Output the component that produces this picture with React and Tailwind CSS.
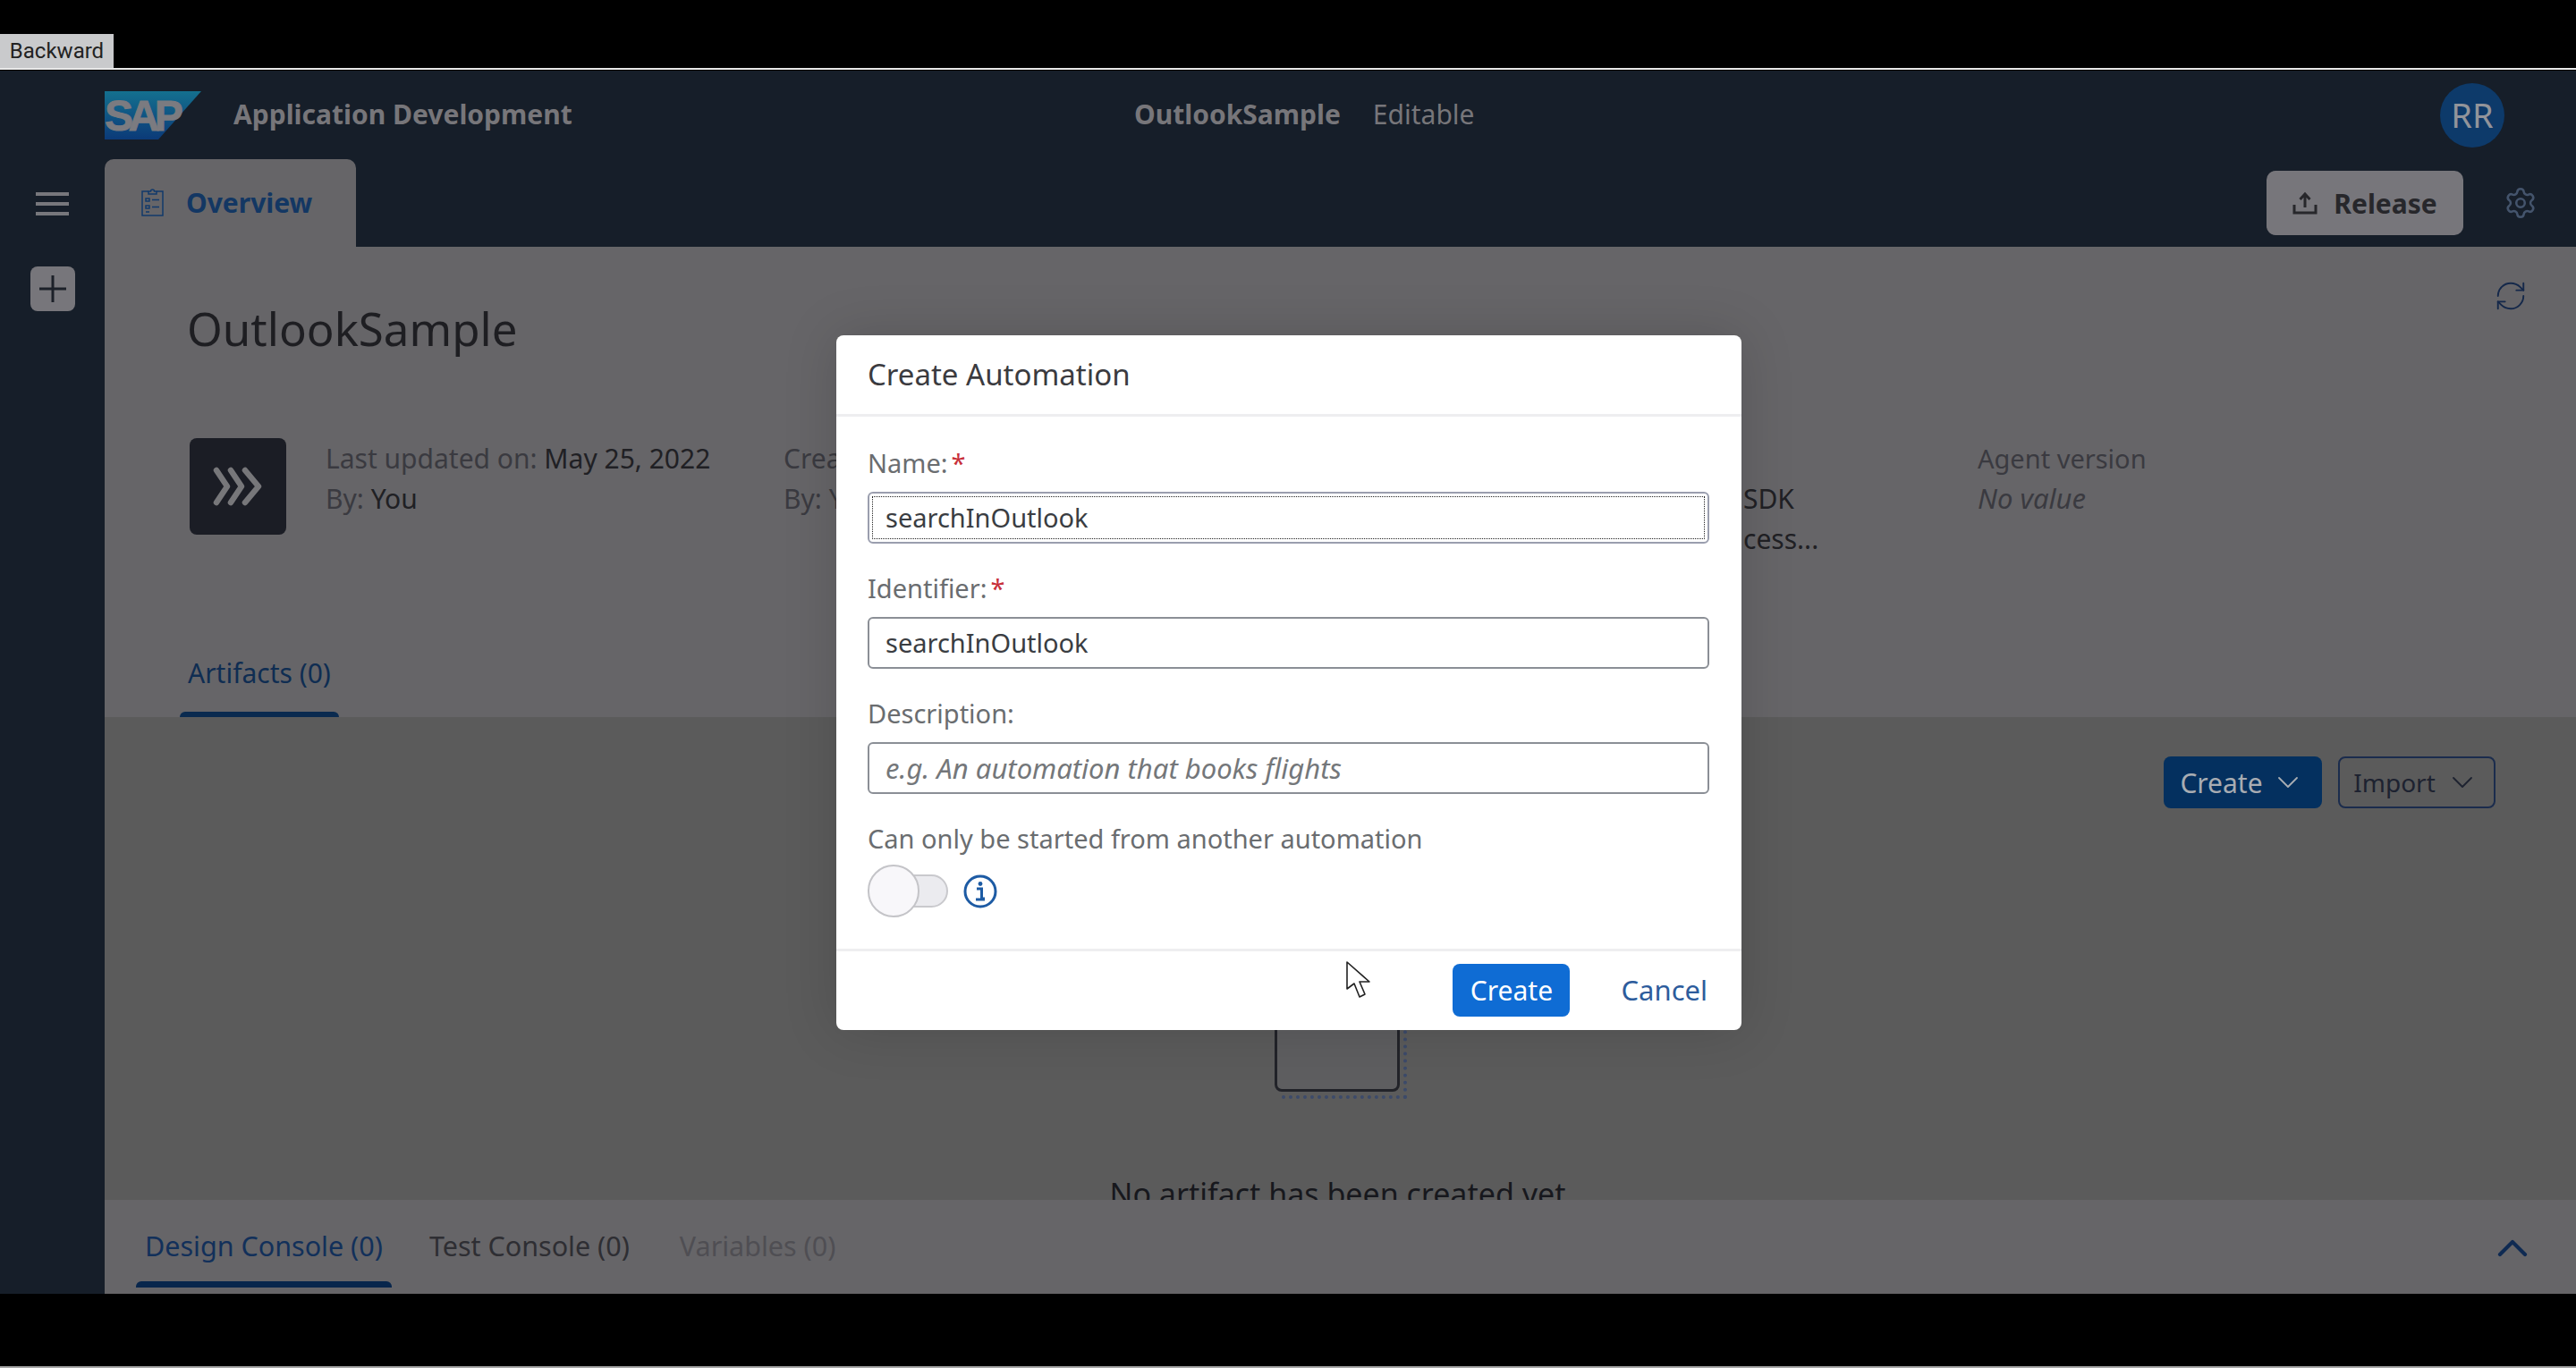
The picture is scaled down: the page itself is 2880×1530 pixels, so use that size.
import { ChevronDown, ChevronUp, RefreshCw, Settings } from "lucide-react";

function SapLogo() {
  return (
    <svg width="108" height="54" viewBox="0 0 108 54" className="shrink-0">
      <defs>
        <linearGradient id="sap" x1="0" y1="0" x2="0" y2="1">
          <stop offset="0" stopColor="#14708f" />
          <stop offset="1" stopColor="#0b3a78" />
        </linearGradient>
      </defs>
      <polygon points="0,0 108,0 60,54 0,54" fill="url(#sap)" />
      <text x="0" y="44" fontFamily="Liberation Sans" fontWeight="700" fontSize="48" letterSpacing="-5.5" fill="#7b7b80" stroke="#7b7b80" strokeWidth="1">
        SAP
      </text>
    </svg>
  );
}

function ClipboardIcon() {
  return (
    <svg width="25" height="32" viewBox="0 0 25 32" fill="none" stroke="#123a6b" strokeWidth="1.5" className="shrink-0">
      <path d="M8 4H1v27h23V4h-7" />
      <path d="M8 7V4h2.5a2 2 0 0 1 4 0H17v3z" />
      <path d="M5 12h4v3H5zM5 20h4v3H5zM12 13.5h8M12 21.5h8M5 27h4" />
    </svg>
  );
}

function UploadIcon() {
  return (
    <svg width="28" height="26" viewBox="0 0 28 26" fill="none" stroke="#27272b" strokeWidth="3" className="shrink-0">
      <path d="M14 3v15M8.5 9 14 3l5.5 6" />
      <path d="M2 15v9h24v-9" />
    </svg>
  );
}

function InfoIcon() {
  return (
    <svg width="38" height="38" viewBox="0 0 38 38" fill="none" className="shrink-0">
      <circle cx="19" cy="19" r="17" stroke="#1d5ba4" strokeWidth="3" />
      <circle cx="19" cy="10.5" r="2.4" fill="#1d5ba4" />
      <path d="M15 16h5.5v11H24M14 28h10" stroke="#1d5ba4" strokeWidth="3" />
    </svg>
  );
}

function Cursor() {
  return (
    <svg width="28" height="41" viewBox="0 0 28 41" className="absolute left-[1505px] top-[1075px]">
      <path d="M1 1v30l8-6 6 15 6-3-6-14h11z" fill="#fff" stroke="#222" strokeWidth="1.6" strokeLinejoin="round" />
    </svg>
  );
}

function Field({ label, required, children, className = "" }) {
  return (
    <div className={className}>
      <div className="h-[40px] leading-[40px] text-[#6a6d70] flex">
        {label}
        {required && <span className="ml-[4px] text-[#c8303a]">*</span>}
      </div>
      {children}
    </div>
  );
}

function CreateDialog() {
  return (
    <div className="absolute left-[935px] top-[375px] w-[1012px] h-[777px] bg-white rounded-[8px] flex flex-col shadow-[0_0_60px_rgba(0,0,0,0.15)] text-[29px]">
      <div className="h-[91px] shrink-0 pl-[35px] flex items-center border-b-[3px] border-[#eeeef0] text-[#3b3b3f] text-[33px]">
        Create Automation
      </div>
      <div className="pl-[35px] pr-[36px] pt-[32px]">
        <Field label="Name:" required>
          <div className="mt-[12px] h-[58px] rounded-[6px] border-2 border-[#9a9eae] p-[3px]">
            <div className="h-full border border-dotted border-[#222] flex items-center pl-[14px] text-[#3a3d42]">
              searchInOutlook
            </div>
          </div>
        </Field>
        <Field label="Identifier:" required className="mt-[30px]">
          <div className="mt-[12px] h-[58px] rounded-[6px] border-2 border-[#8b8f96] flex items-center pl-[18px] text-[#3a3d42]">
            searchInOutlook
          </div>
        </Field>
        <Field label="Description:" className="mt-[30px]">
          <div className="mt-[12px] h-[58px] rounded-[6px] border-2 border-[#8b8f96] flex items-center pl-[18px] italic text-[31px] text-[#74777a]">
            e.g. An automation that books flights
          </div>
        </Field>
        <div className="mt-[30px] h-[40px] leading-[40px] text-[#6a6d70]">Can only be started from another automation</div>
        <div className="mt-[9px] flex items-center">
          <div className="relative z-10 w-[58px] h-[59px] rounded-full bg-[#f8f7fa] border-2 border-[#c4c4c8]" />
          <div className="-ml-[28px] w-[60px] h-[37px] rounded-r-full bg-[#ebebef] border-2 border-[#c9c9cd]" />
          <div className="ml-[17px]">
            <InfoIcon />
          </div>
        </div>
      </div>
      <div className="mt-auto h-[91px] shrink-0 border-t-[3px] border-[#eeeef0] flex items-center justify-end pr-[38px] pb-[2px]">
        <div className="w-[131px] h-[59px] rounded-[8px] bg-[#0f6cd4] text-white text-[30px] flex items-center justify-center">Create</div>
        <div className="ml-[57px] text-[31px] text-[#2d5c9c]">Cancel</div>
      </div>
    </div>
  );
}

export default function App() {
  return (
    <div className="relative w-[2880px] h-[1530px] overflow-hidden bg-black flex flex-col [font-family:'Noto_Sans','Liberation_Sans',sans-serif] text-[30px]">
      {/* video player strip */}
      <div className="h-[76px] shrink-0 flex items-end">
        <div className="w-[127px] h-[38px] bg-[#c9cacc] text-[#222] text-[24px] flex items-center justify-center [font-family:Roboto,sans-serif]">
          Backward
        </div>
      </div>
      <div className="h-[2px] shrink-0 bg-[#e8e8e8]" />
      <div className="h-[1px] shrink-0" />

      <div className="h-[1368px] shrink-0 bg-[#161e29] flex flex-col">
        {/* shell bar */}
        <div className="h-[99px] shrink-0 flex items-center pl-[117px] pr-[80px]">
          <SapLogo />
          <div className="ml-[36px] w-[1007px] pb-[2px] font-bold text-[#77767a]">Application Development</div>
          <div className="pb-[2px] font-bold text-[#77767a]">OutlookSample</div>
          <div className="ml-[36px] pb-[2px] text-[#77767a]">Editable</div>
          <div className="ml-auto w-[72px] h-[72px] rounded-full bg-[#0d3a6a] text-[#92949a] text-[38px] flex items-center justify-center">
            RR
          </div>
        </div>

        <div className="flex-1 flex min-h-0">
          {/* side nav */}
          <div className="w-[117px] shrink-0 flex flex-col items-center pt-[37px]">
            <div className="w-[37px] flex flex-col gap-[7px]">
              <div className="h-[4px] bg-[#77777c]" />
              <div className="h-[4px] bg-[#77777c]" />
              <div className="h-[4px] bg-[#77777c]" />
            </div>
            <div className="mt-[57px] w-[50px] h-[50px] rounded-[8px] bg-[#77767b] flex items-center justify-center">
              <svg width="32" height="32" viewBox="0 0 32 32" stroke="#1c2029" strokeWidth="3">
                <path d="M16 1v30M1 16h30" />
              </svg>
            </div>
          </div>

          <div className="flex-1 min-w-0 flex flex-col">
            {/* tabs row */}
            <div className="h-[98px] shrink-0 flex items-center pr-[43px]">
              <div className="w-[281px] h-full bg-[#666568] rounded-t-[10px] flex items-center pl-[41px] pb-[2px]">
                <ClipboardIcon />
                <div className="ml-[25px] font-bold text-[#133763]">Overview</div>
              </div>
              <div className="ml-auto w-[220px] h-[72px] rounded-[10px] bg-[#77767b] flex items-center justify-center gap-[18px] font-bold text-[#27272b]">
                <UploadIcon />
                Release
              </div>
              <Settings size={38} strokeWidth={1.6} className="ml-[45px] text-[#44546c]" />
            </div>

            {/* header section */}
            <div className="h-[526px] shrink-0 bg-[#666568] flex flex-col pt-[36px] pl-[93px] pr-[54px]">
              <div className="flex items-start justify-between">
                <div className="-ml-[1px] mt-[25px] text-[51px] leading-[60px] text-[#1e1e22]">OutlookSample</div>
                <RefreshCw size={38} strokeWidth={1.2} className="text-[#14284a]" />
              </div>
              <div className="mt-[93px] flex items-start leading-[45px] text-[#3a3a40]">
                <div className="ml-[2px] w-[108px] h-[108px] shrink-0 rounded-[8px] bg-[#1b1d25] flex items-center justify-center">
                  <svg width="56" height="44" viewBox="0 0 56 44" fill="none" stroke="#77777a" strokeWidth="6.5" strokeLinecap="round" strokeLinejoin="round">
                    <path d="M4 4l12 18L4 40M20 4l12 18-12 18M36 4l15 18-15 18" />
                  </svg>
                </div>
                <div className="ml-[44px] w-[512px] shrink-0">
                  <div>
                    Last updated on: <span className="text-[#202024]">May 25, 2022</span>
                  </div>
                  <div>
                    By: <span className="text-[#202024]">You</span>
                  </div>
                </div>
                {/* only the start of this column shows beside the dialog */}
                <div className="w-[1073px] shrink-0 whitespace-nowrap">
                  <div>Crea</div>
                  <div>By: Y</div>
                </div>
                <div className="w-[262px] shrink-0 text-[#202024]">
                  <div>&nbsp;</div>
                  <div>SDK</div>
                  <div>cess...</div>
                </div>
                <div className="text-[29px]">
                  <div>Agent version</div>
                  <div className="italic text-[31px]">No value</div>
                </div>
              </div>
              <div className="mt-auto w-fit -ml-[9px] flex flex-col items-center">
                <div className="px-[9px] text-[#0f2d52]">Artifacts (0)</div>
                <div className="mt-[21px] w-full h-[6px] rounded-t-[6px] bg-[#0a2a4f]" />
              </div>
            </div>

            {/* artifacts section */}
            <div className="h-[540px] shrink-0 bg-[#5b5b5b] overflow-hidden flex flex-col relative">
              <div className="shrink-0 flex justify-end pt-[44px] pr-[90px] gap-[18px]">
                <div className="w-[177px] h-[58px] rounded-[8px] bg-[#04305f] text-[#a8acb2] flex items-center justify-center gap-[8px]">
                  Create
                  <ChevronDown size={40} strokeWidth={1.1} />
                </div>
                <div className="w-[176px] h-[58px] rounded-[8px] border-2 border-[#1b2c4d] text-[#1d2230] text-[28px] flex items-center justify-center gap-[10px]">
                  Import
                  <ChevronDown size={40} strokeWidth={1.1} />
                </div>
              </div>
              <div className="mt-[184px] ml-[1308px] relative w-[140px] h-[133px] shrink-0">
                <div className="absolute left-[8px] top-[8px] w-[140px] h-[133px] border-r-[4px] border-b-[4px] border-dotted border-[#3c4a6a]" />
                <div className="absolute inset-0 rounded-[8px] bg-[#5e5e60] border-[3px] border-[#222329]" />
              </div>
              <div className="mt-[92px] text-center pr-[6px] text-[34px] leading-[44px] text-[#17181d] shrink-0">
                No artifact has been created yet
              </div>
            </div>

            {/* console bar */}
            <div className="flex-1 bg-[#666568] flex pl-[35px] pr-[50px] relative text-[30.5px]">
              <div className="flex flex-col items-center">
                <div className="mt-[28px] px-[10px] leading-[46px] text-[#12305a]">Design Console (0)</div>
                <div className="mt-auto mb-[7px] w-full h-[7px] rounded-t-[6px] bg-[#08264c]" />
              </div>
              <div className="mt-[28px] ml-[42px] leading-[46px] text-[#2e2e33]">Test Console (0)</div>
              <div className="mt-[28px] ml-[56px] leading-[46px] text-[#4f4e53]">Variables (0)</div>
              <ChevronUp size={56} strokeWidth={1.8} className="ml-auto mt-[26px] -mr-[7px] text-[#0f2a52]" />
            </div>
          </div>
        </div>
      </div>

      <div className="mt-auto h-[2px] shrink-0 bg-[#a8a8a8]" />

      <CreateDialog />
      <Cursor />
    </div>
  );
}
